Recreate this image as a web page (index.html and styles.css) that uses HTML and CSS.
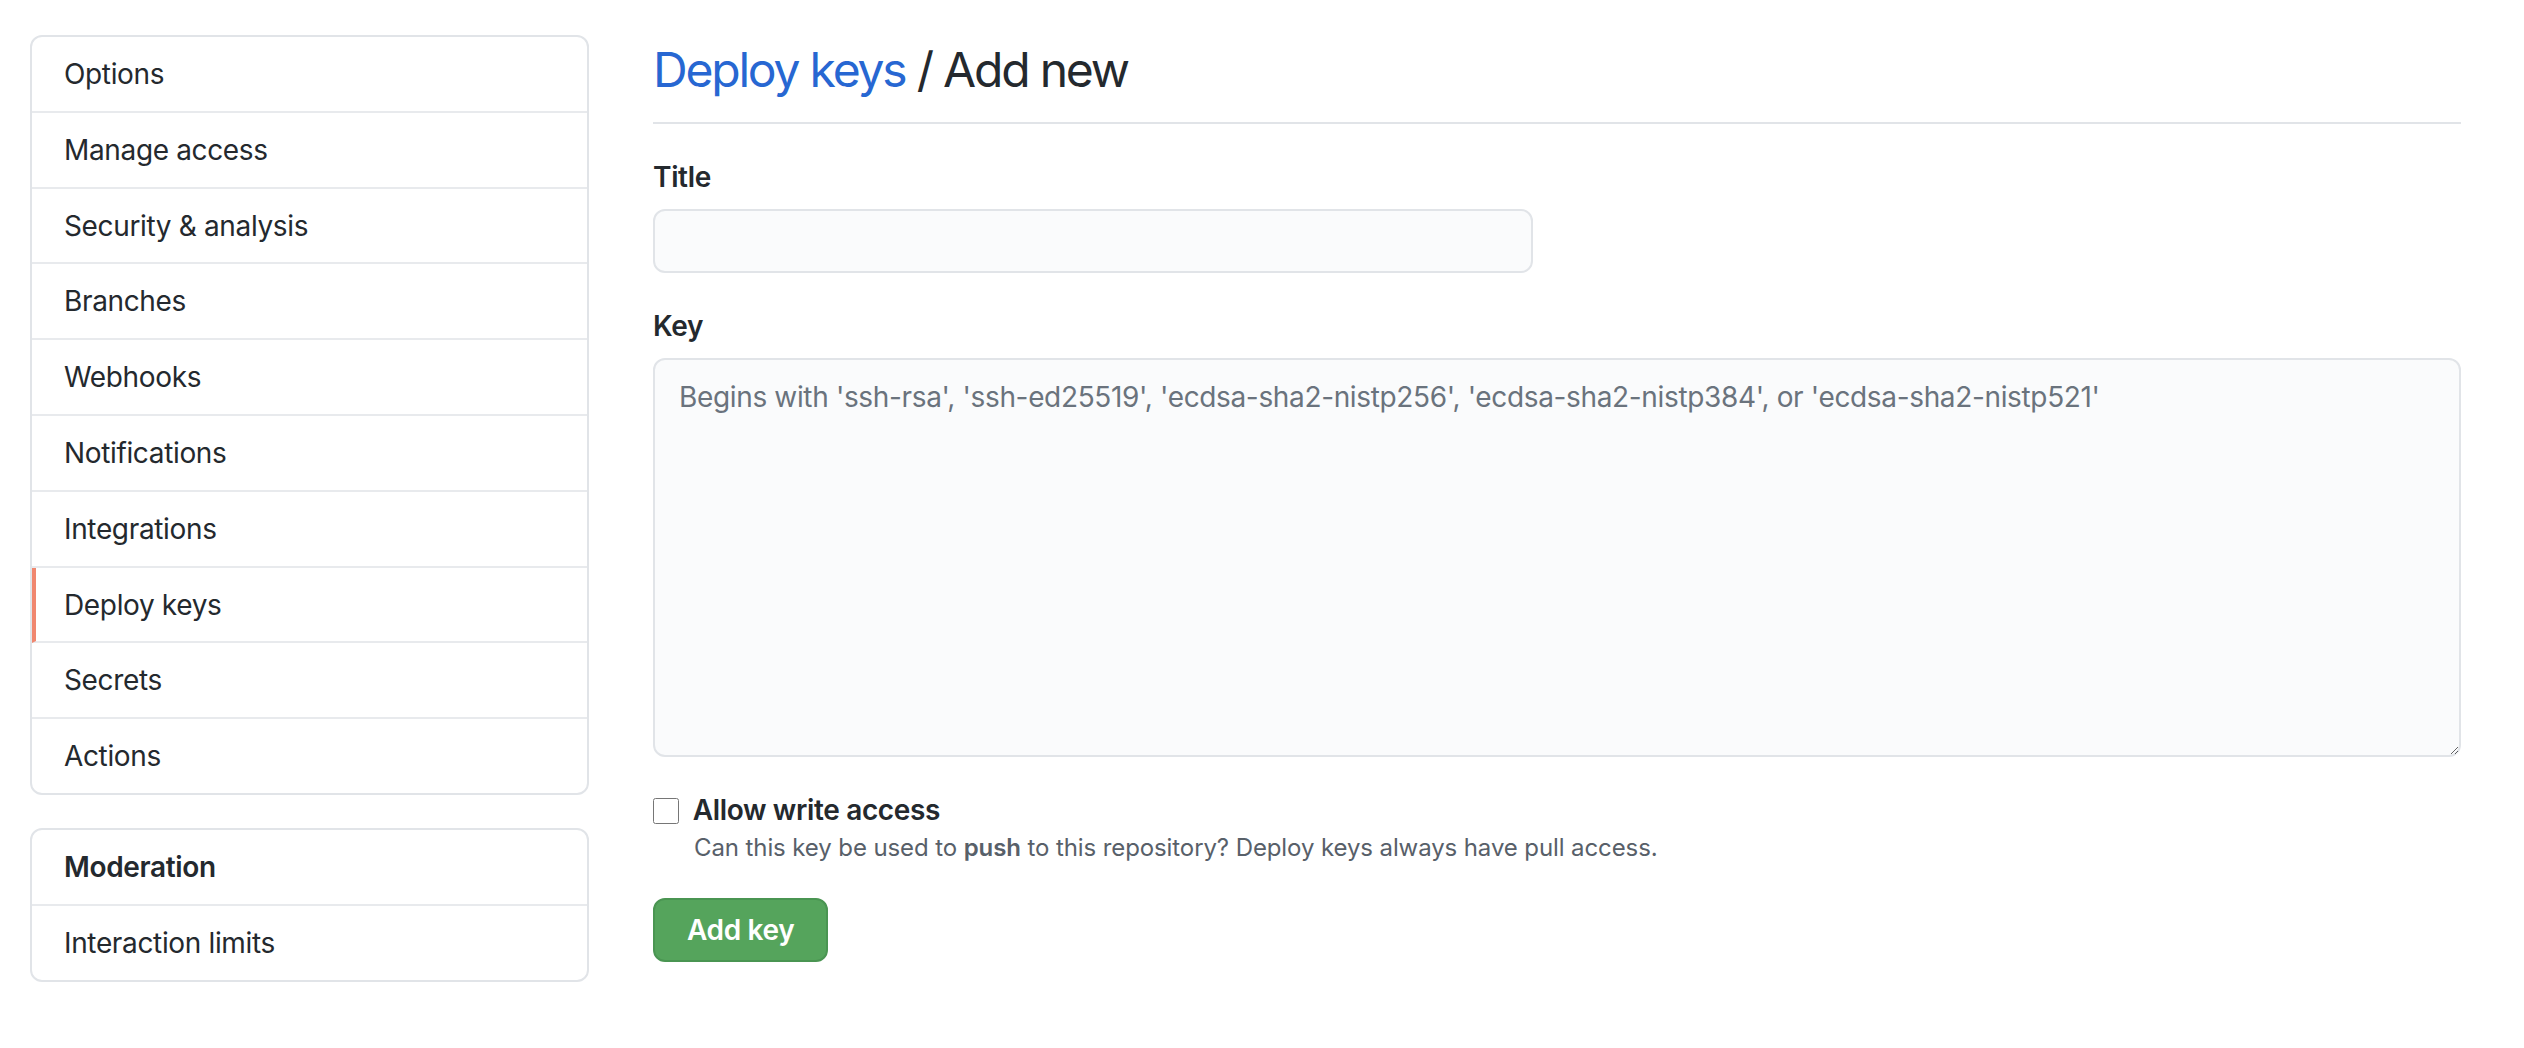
FILE: index.html
```html
<!DOCTYPE html>
<html lang="en">

<head>
    <meta charset="UTF-8">
    <meta name="viewport" content="width=device-width, initial-scale=1.0">
    <title>Deploy keys / Add new</title>
    <link rel="stylesheet" href="styles.css">
</head>

<body>
    <div class="layout">
        <nav class="sidebar">
            <div class="menu">
                <a class="menu-item" href="#">Options</a>
                <a class="menu-item" href="#">Manage access</a>
                <a class="menu-item" href="#">Security &amp; analysis</a>
                <a class="menu-item" href="#">Branches</a>
                <a class="menu-item" href="#">Webhooks</a>
                <a class="menu-item" href="#">Notifications</a>
                <a class="menu-item" href="#">Integrations</a>
                <a class="menu-item selected" href="#">Deploy keys</a>
                <a class="menu-item" href="#">Secrets</a>
                <a class="menu-item" href="#">Actions</a>
            </div>
            <div class="menu">
                <div class="menu-heading">Moderation</div>
                <a class="menu-item" href="#">Interaction limits</a>
            </div>
        </nav>

        <main class="main">
            <div class="subhead">
                <h2 class="subhead-heading"><a href="#">Deploy keys</a> / Add new</h2>
            </div>

            <form id="deployKeyForm">
                <div class="form-group">
                    <label for="title">Title</label>
                    <input type="text" id="title" name="title" class="form-control title-input">
                </div>
                <div class="form-group">
                    <label for="key">Key</label>
                    <textarea id="key" name="key" class="form-control key-input"
                        placeholder="Begins with 'ssh-rsa', 'ssh-ed25519', 'ecdsa-sha2-nistp256', 'ecdsa-sha2-nistp384', or 'ecdsa-sha2-nistp521'"></textarea>
                </div>
                <div class="form-checkbox">
                    <label class="checkbox-label">
                        <input type="checkbox" id="readOnly" name="read_only">
                        Allow write access
                    </label>
                    <p class="note">Can this key be used to <strong>push</strong> to this repository? Deploy keys always have pull access.</p>
                </div>
                <button type="submit" class="btn-primary">Add key</button>
            </form>
        </main>
    </div>
</body>

</html>
```

FILE: styles.css
```css
body {
    margin: 0;
    background-color: #ffffff;
    color: #24292e;
    font-family: Inter, "Noto Sans", sans-serif;
    font-size: 28px;
    letter-spacing: -0.35px;
}

a {
    color: inherit;
    text-decoration: none;
}

.layout {
    display: flex;
    gap: 64px;
    padding: 35px 63px 0 30px;
}

.sidebar {
    width: 559px;
    flex-shrink: 0;
}

.menu {
    border: 2px solid #e1e4e8;
    border-radius: 12px;
    margin-bottom: 33px;
    overflow: hidden;
}

.menu-item,
.menu-heading {
    display: block;
    padding: 16px 32px 15.8px;
    line-height: 42px;
    border-bottom: 2px solid #e8eaed;
}

.menu-item:last-child {
    border-bottom: none;
}

.menu-heading {
    font-weight: 600;
}

.menu-item.selected {
    padding-left: 28px;
    border-left: 4px solid #f0876f;
}

.main {
    flex: 1;
    padding-top: 5px;
}

.subhead {
    border-bottom: 2px solid #e1e4e8;
    padding-bottom: 22px;
    margin-bottom: 33px;
}

.subhead-heading {
    margin: 0;
    font-size: 48px;
    font-weight: 400;
    line-height: 60px;
    letter-spacing: -2.2px;
}

.subhead-heading a {
    color: #2767d2;
}

.form-group {
    margin-bottom: 33px;
}

.form-group label {
    display: block;
    font-weight: 600;
    line-height: 40px;
    margin-bottom: 12px;
}

.form-control {
    box-sizing: border-box;
    font-family: inherit;
    font-size: 28px;
    letter-spacing: -0.35px;
    color: #24292e;
    background-color: #fafbfc;
    border: 2px solid #e1e4e8;
    border-radius: 12px;
    outline: none;
}

.form-control::placeholder {
    color: #6a737d;
}

.title-input {
    width: 880px;
    height: 64px;
    padding: 0 24px;
}

.key-input {
    display: block;
    width: 100%;
    height: 399px;
    padding: 17px 24px;
    line-height: 40px;
    resize: vertical;
}

.form-checkbox {
    padding-left: 41px;
    margin-bottom: 32px;
}

.checkbox-label {
    display: block;
    font-weight: 600;
    line-height: 40px;
}

.checkbox-label input {
    width: 26px;
    height: 26px;
    margin: 0 7px 0 -41px;
    vertical-align: -4px;
}

.note {
    margin: 0;
    font-size: 24px;
    line-height: 36px;
    letter-spacing: -0.1px;
    color: #586069;
}

.note strong {
    font-weight: 600;
}

.btn-primary {
    height: 64px;
    padding: 0 32px;
    font-family: inherit;
    font-size: 28px;
    font-weight: 600;
    letter-spacing: -0.35px;
    color: #ffffff;
    background-color: #55a45c;
    border: 2px solid #4a9552;
    border-radius: 12px;
    cursor: pointer;
}
```
